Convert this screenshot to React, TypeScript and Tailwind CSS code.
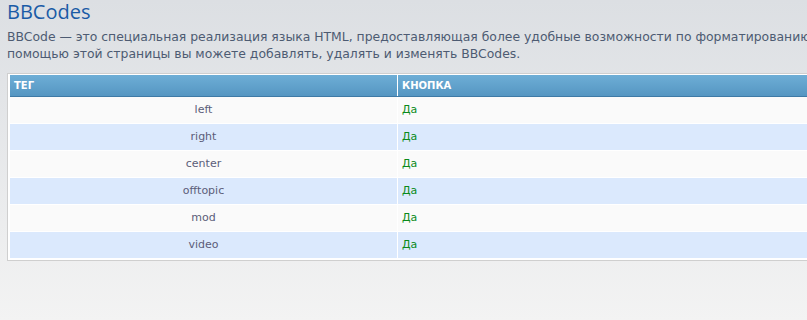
import React from "react";

const rows = ["left", "right", "center", "offtopic", "mod", "video"];

export default function App() {
  return (
    <div
      className="w-[807px] h-[320px] overflow-hidden bg-gradient-to-b from-[#dcdfe3] to-[#f3f3f3] pl-[7px]"
      style={{ fontFamily: '"DejaVu Sans", Verdana, sans-serif' }}
    >
      <h1
        className="text-[20px] leading-[24px] font-medium text-[#1a5ba6]"
        style={{ fontFamily: '"Open Sans", "DejaVu Sans", sans-serif' }}
      >
        BBCodes
      </h1>
      <p className="text-[12.4px] leading-[17px] text-[#4d5b72] whitespace-nowrap mt-[4px]">
        BBCode — это специальная реализация языка HTML, предоставляющая более удобные возможности по форматированию
        <br />
        помощью этой страницы вы можете добавлять, удалять и изменять BBCodes.
      </p>
      <div className="mt-[11px] w-[1000px] border border-[#cfcfcf] bg-white p-[2px] pt-[1px]">
        <div className="flex h-[22px] bg-gradient-to-b from-[#6eaed6] to-[#5596c2] border-b border-[#3e7aa6] text-white text-[10px] font-bold">
          <div className="w-[387px] flex items-center pl-[4px]">ТЕГ</div>
          <div className="w-px bg-white" />
          <div className="flex-1 flex items-center pl-[4px]">КНОПКА</div>
        </div>
        {rows.map((r, i) => (
          <div
            key={r}
            className={`flex text-[11px] ${i % 2 === 0 ? "bg-[#fafafa]" : "bg-[#dbe9fd]"} ${i === rows.length - 1 ? "h-[26px]" : "h-[27px] border-b border-white"}`}
          >
            <div className="w-[387px] flex items-center justify-center text-[#5b5d79]">{r}</div>
            <div className="w-px bg-white" />
            <div className="flex-1 flex items-center pl-[4px] text-[#0a8a1a]">Да</div>
          </div>
        ))}
      </div>
    </div>
  );
}
